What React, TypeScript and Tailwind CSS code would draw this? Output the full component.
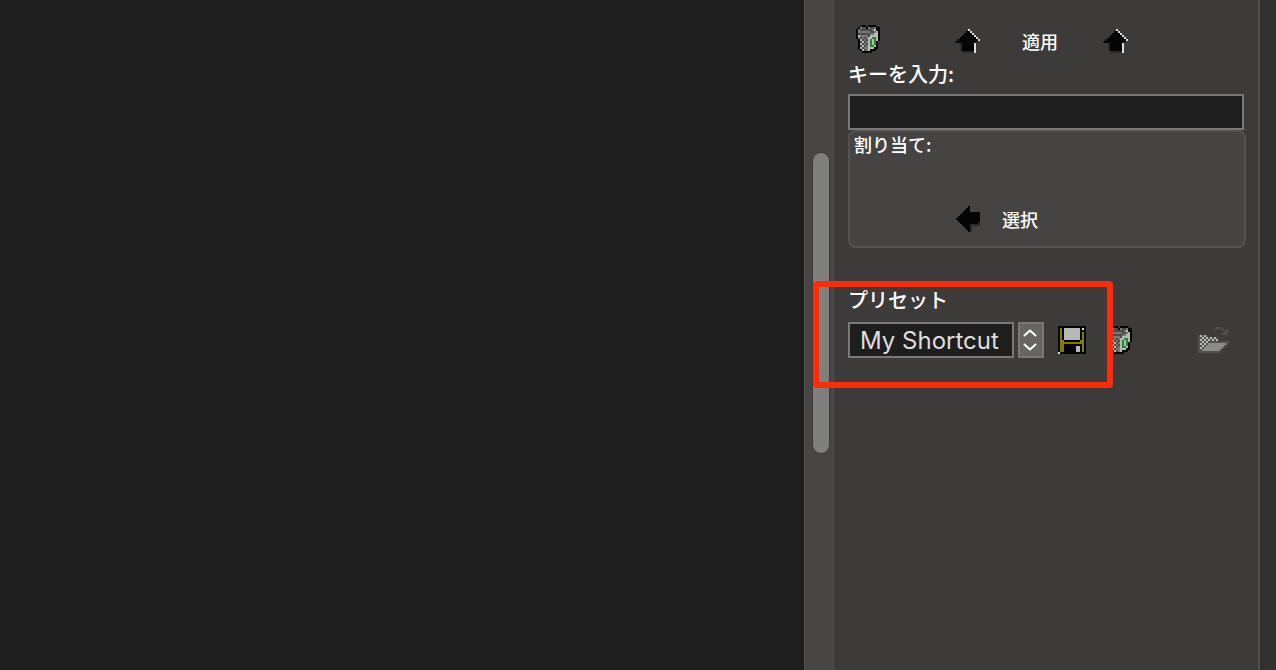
import { useState } from "react";

type IconProps = { rows: string[]; className?: string };

const PALETTE: Record<string, string> = {
  K: "#050505",
  D: "#4c4c4a",
  M: "#777775",
  L: "#b9b9b8",
  W: "#dededd",
  g: "#1f8a2c",
  o: "#7f7a08",
  s: "#2b2a29",
  q: "#52514f",
  n: "#8b8b89",
};

function PixelIcon({ rows, className }: IconProps) {
  const w = rows[0].length;
  const h = rows.length;
  return (
    <svg
      width={w * 2}
      height={h * 2}
      viewBox={`0 0 ${w} ${h}`}
      shapeRendering="crispEdges"
      className={className}
      aria-hidden="true"
    >
      {rows.flatMap((row, y) =>
        row.split("").map((c, x) =>
          PALETTE[c] ? (
            <rect key={`${x}-${y}`} x={x} y={y} width={1} height={1} fill={PALETTE[c]} />
          ) : null,
        ),
      )}
    </svg>
  );
}

const TRASH = [
  "..sKK.KKKKs.",
  ".KMDDKMDDMKK",
  "KMDDDDDDMLKK",
  "KMMMMMMDDMLK",
  "KDDDDDDMMLLK",
  "KLMMMMDLLLLK",
  "KMDMDMLLggLK",
  "sKLDMDLgLgLK",
  ".KDLDMLgLgK.",
  ".KLDMDLgLgK.",
  ".KDLDMLggLK.",
  ".KLDMMLLLKK.",
  ".sKLDMLKKK..",
  "...KKKKK....",
];

const ARROW_UP = [
  ".......W.....",
  "......KKW....",
  ".....KKKKW...",
  "....KKKKKKW..",
  "...KKKKKKKKW.",
  ".sKKKKKKKKKKW",
  "sKKKKKKKKKKs.",
  "...sKKKKKKW..",
  "...sKKKKKKW..",
  "...sKKKKKKW..",
  "...sKKKKKKW..",
  "....ssssssW..",
];

const ARROW_LEFT = [
  "......K.....",
  ".....KK.....",
  "....KKK.....",
  "...KKKKKKKKK",
  "..KKKKKKKKKK",
  ".KKKKKKKKKKK",
  "KKKKKKKKKKKK",
  ".KKKKKKKKKKK",
  "..KKKKKKKKKs",
  "...KKKKsssss",
  "....KKKs....",
  ".....KKs....",
  "......Ks....",
];

const FLOPPY = [
  "KKKKKKKKKKKKKK",
  "KoKLLLLLLLLKWK",
  "KoKLLLLLLLLKKK",
  "KoKLLLLLLLLKoK",
  "KoKLLLLLLLLKoK",
  "KoKLLLLLLLLKoK",
  "KoKLLLLLLLLKoK",
  "KooKKKKKKKKooK",
  "KooooooooooooK",
  "KooKKKKKKKKKoK",
  "KooKKKKKKLLKoK",
  "KooKKKKKKLLKoK",
  "KooKKKKKKLLKoK",
  "WKKKKKKKKKKKKK",
];

const FOLDER = [
  ".........qqq....",
  "........q...q.q.",
  ".............qq.",
  "............qqq.",
  "qLqLq...........",
  "qqLqLqLqLq......",
  "qLqLqLqLqL......",
  "qqLqLqqqqqqqqqqq",
  "qLqLqnnnnnnnnnq.",
  "qqLqnnnnnnnnnq..",
  "qLqnnnnnnnnnq...",
  "qqnnnnnnnnnq....",
  "qqqqqqqqqqq.....",
];

export default function App() {
  const [keys, setKeys] = useState("");
  const [preset, setPreset] = useState("My Shortcut");

  return (
    <div className="flex min-h-screen overflow-hidden bg-[#1e1e1e] font-['Noto_Sans_CJK_JP',sans-serif] text-lg leading-6 font-medium text-white">
      <main className="min-w-0 flex-1" />

      <div className="flex w-[30px] shrink-0 justify-end border-x border-[#535250] bg-[#474644] pt-[153px] pr-1">
        <div className="h-[300px] w-4 rounded-full bg-[#7f7f7d] ring-1 ring-[#3d3c3a]" />
      </div>

      <aside className="w-[426px] shrink-0 border-r-2 border-[#52514f] bg-[#3d3b39] pr-3 pl-3.5">
        <div className="flex h-[62px] items-center pt-5">
          <button type="button" aria-label="削除" className="ml-2 -mt-1">
            <PixelIcon rows={TRASH} className="block" />
          </button>
          <button type="button" aria-label="上へ" className="ml-[74px]">
            <PixelIcon rows={ARROW_UP} className="block" />
          </button>
          <button type="button" className="ml-[42px]">適用</button>
          <button type="button" aria-label="上へ戻す" className="ml-11">
            <PixelIcon rows={ARROW_UP} className="block" />
          </button>
        </div>

        <label htmlFor="key-input" className="block h-8 text-xl leading-6">
          キーを入力:
        </label>
        <input
          id="key-input"
          type="text"
          value={keys}
          onChange={(e) => setKeys(e.target.value)}
          className="block h-9 w-[calc(100%-2px)] border-2 border-[#7b7977] bg-[#1e1e1e] px-2.5 outline-none"
        />

        <section className="h-[118px] rounded-lg border-2 border-[#535250] bg-[#464442] pl-1">
          <h2>割り当て:</h2>
          <div className="mt-[50px] flex items-center pl-[102px]">
            <button type="button" className="flex items-center gap-[22px]">
              <PixelIcon rows={ARROW_LEFT} />
              選択
            </button>
          </div>
        </section>

        <section className="relative pt-10">
          <label htmlFor="preset" className="block h-[34px] text-xl leading-6">
            プリセット
          </label>
          <div className="flex h-9 items-center">
            <input
              id="preset"
              type="text"
              value={preset}
              onChange={(e) => setPreset(e.target.value)}
              className="h-9 w-[166px] border-2 border-[#7b7977] bg-[#1e1e1e] px-2.5 font-[Inter,sans-serif] text-2xl font-normal text-[#dededd] outline-none"
            />
            <button
              type="button"
              aria-label="プリセットを選択"
              className="ml-1 flex h-9 w-[26px] items-center justify-center border-2 border-[#7b7977] bg-[#666563]"
            >
              <svg width="16" height="26" viewBox="0 0 16 26" fill="none" stroke="#fff" strokeWidth="2" strokeLinecap="round" strokeLinejoin="round">
                <path d="M1.5 8.5 7 3.5l5.5 5M1.5 17.5 7 22.5l5.5-5" />
              </svg>
            </button>
            <button type="button" aria-label="保存" className="ml-3.5">
              <PixelIcon rows={FLOPPY} className="block" />
            </button>
            <button type="button" aria-label="プリセットを削除" className="ml-[22px]">
              <PixelIcon rows={TRASH} className="block" />
            </button>
            <button type="button" aria-label="開く" disabled className="ml-[66px]">
              <PixelIcon rows={FOLDER} className="block" />
            </button>
          </div>
          <div className="pointer-events-none absolute top-[33px] -left-[35px] h-[107px] w-[300px] rounded-sm border-6 border-[#fc2b0a]" />
        </section>
      </aside>

      <div className="w-4 shrink-0 bg-[#333130]" />
    </div>
  );
}
